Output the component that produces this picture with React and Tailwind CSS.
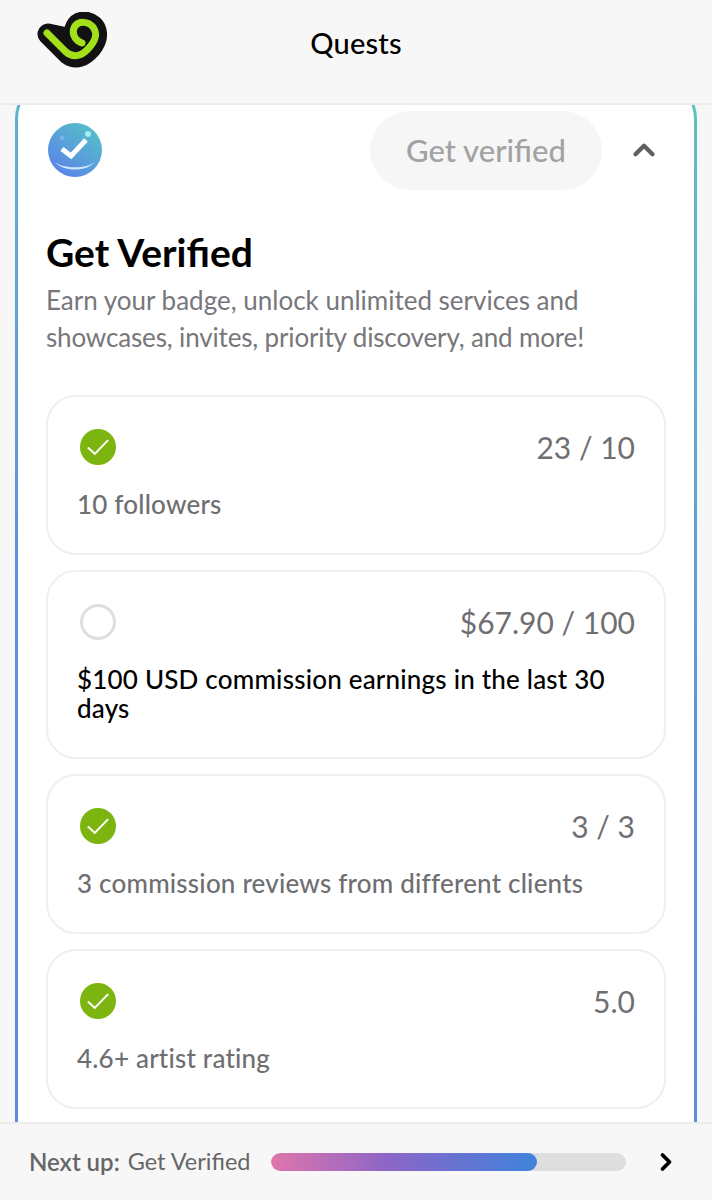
import React from "react";
import { ChevronUp, ChevronRight } from "lucide-react";

function Check() {
  return (
    <svg width="36" height="36" viewBox="0 0 36 36" className="block">
      <circle cx="18" cy="18" r="18" fill="#7cb50f" />
      <path d="M7 18.5 L14.5 25.5 L29 10.5" fill="none" stroke="#fff" strokeWidth="2.2" transform="translate(18 18) scale(.92) translate(-18 -18)" />
    </svg>
  );
}

function Empty() {
  return <div className="w-9 h-9 rounded-full border-[3px] border-[#dfdfdf]" />;
}

function Row({ done, value, label, dark, h }) {
  return (
    <div className={`${h} rounded-[30px] border-2 border-[#efefef] bg-white pl-[29px] pr-[29px] pt-[32px]`}>
      <div className="flex items-center justify-between h-9 pl-[3px]">
        {done ? <Check /> : <Empty />}
        <span className="text-[30px] leading-none text-[#6f6f73] font-normal">{value}</span>
      </div>
      <div className={`mt-[25px] text-[26px] tracking-[0.2px] leading-[29px] font-medium ${dark ? "text-black" : "text-[#6f6f73]"}`}>{label}</div>
    </div>
  );
}

export default function App() {
  return (
    <div className="w-[712px] h-[1200px] overflow-hidden flex flex-col bg-[#f7f7f7] font-['Lato',sans-serif]">
      <header className="h-[105px] shrink-0 border-b-2 border-[#ececec] flex items-center justify-center relative">
        <svg width="76" height="60" viewBox="36 12 76 60" className="absolute left-[36px] top-[12px]">
          <path d="M48 34 L68 54 C76 60 84 56 91 48 C100 37 98 24 85 22 C76 22 72 30 76 40 Z" fill="#121212" stroke="#121212" strokeWidth="21" strokeLinecap="round" strokeLinejoin="round" />
          <path d="M47 33 L66 52 C73 58 81 56 87 50 C96 41 98 34 93 27 C88 21 79 21 75 26 C71 32 74 40 82 43" fill="none" stroke="#a3e01c" strokeWidth="7" strokeLinecap="round" strokeLinejoin="round" />
        </svg>
        <h1 className="text-[29px] tracking-[0.2px] font-medium text-black leading-none mb-[18px]">Quests</h1>
      </header>

      <main className="flex-1 min-h-0 overflow-hidden px-[15px]">
        <div className="-mt-[30px] h-[1100px] rounded-[44px] p-[3px] bg-[linear-gradient(15deg,#5f88e2_0%,#5f8fe0_45%,#60aecf_80%,#5fc4b8_100%)]">
          <div className="h-full rounded-[41px] bg-white px-[28px] pt-[32px]">
            <div className="flex items-center h-[80px]">
              <svg width="56" height="56" viewBox="0 0 56 56" className="ml-[1px]">
                <defs>
                  <linearGradient id="b" x1="0.2" y1="0.9" x2="0.8" y2="0.1">
                    <stop offset="0" stopColor="#5b86e6" />
                    <stop offset="1" stopColor="#55bccb" />
                  </linearGradient>
                </defs>
                <circle cx="28" cy="28" r="27" fill="url(#b)" />
                <path d="M8 40 C16 50 40 50 48 40 C40 47 16 47 8 40Z" fill="#cfe6fb" />
                <circle cx="41" cy="12" r="3" fill="#a8ecf0" />
                <circle cx="15" cy="16" r="2.5" fill="#79b0ea" />
                <path d="M15 27 L24 34 L39 18" fill="none" stroke="#fff" strokeWidth="5" />
              </svg>
              <div className="ml-auto w-[232px] h-[79px] rounded-full bg-[#f6f6f6] flex items-center justify-center text-[31px] font-medium text-[#a2a2a2]">Get verified</div>
              <ChevronUp size={34} strokeWidth={3} className="ml-[25px] mr-[5px] text-[#5f5f5f]" />
            </div>
            <h2 className="mt-[40px] text-[39px] leading-[44px] font-bold text-black">Get Verified</h2>
            <p className="mt-[8px] text-[26px] leading-[37px] text-[#77777b]">Earn your badge, unlock unlimited services and<br /><span className="tracking-[-0.15px]">showcases, invites, priority discovery, and more!</span></p>
            <div className="mt-[39px] flex flex-col gap-[15px]">
              <Row h="h-[160px]" done value="23 / 10" label="10 followers" />
              <Row h="h-[189px]" value="$67.90 / 100" label="$100 USD commission earnings in the last 30 days" dark />
              <Row h="h-[160px]" done value="3 / 3" label="3 commission reviews from different clients" />
              <Row h="h-[160px]" done value="5.0" label="4.6+ artist rating" />
            </div>
          </div>
        </div>
      </main>

      <footer className="h-[78px] shrink-0 border-t-2 border-[#ececec] flex items-center pl-[29px] text-[#666669]">
        <span className="font-semibold text-[24px]">Next up:</span>
        <span className="ml-[8px] text-[23.5px]">Get Verified</span>
        <div className="absolute left-[271px] w-[355px] h-[18px] rounded-full bg-[#dedede] overflow-hidden">
          <div className="h-full w-[266px] rounded-full bg-[linear-gradient(90deg,#e075ab_0%,#8a66c8_45%,#3f83dc_100%)]" />
        </div>
        <ChevronRight size={28} strokeWidth={3.2} className="absolute left-[652px] text-black" />
      </footer>
    </div>
  );
}
